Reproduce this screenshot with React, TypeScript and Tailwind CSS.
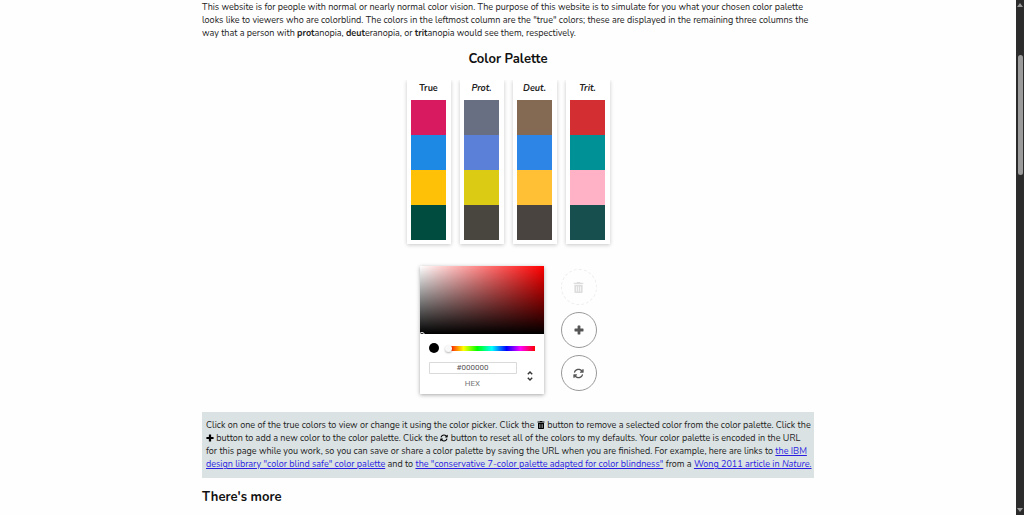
import React from 'react'
import { FaPlus, FaTrashAlt } from 'react-icons/fa'
import { FaArrowsRotate } from 'react-icons/fa6'

const palette = [
  { name: 'True', colors: ['#d81b60', '#1e88e5', '#ffc107', '#004d40'] },
  { name: 'Prot.', colors: ['#696f82', '#5b80d8', '#dccb14', '#49453f'] },
  { name: 'Deut.', colors: ['#846a53', '#2d86e5', '#ffc036', '#4a4441'] },
  { name: 'Trit.', colors: ['#d32f32', '#009196', '#ffb2c5', '#174e4e'] },
]

const App = () => {
  return (
    <div className="flex h-screen overflow-hidden bg-[#fefefe] font-['Nunito','Lato',sans-serif] text-[9px] leading-[13px] text-[#222]">
      <main className="min-w-0 flex-1 pt-px">
        <div className="mx-auto w-full max-w-[612px]">
          <p className="whitespace-nowrap">
            This website is for people with normal or nearly normal color vision. The purpose of this website is to simulate for you what your chosen color palette
            <br />
            looks like to viewers who are colorblind. The colors in the leftmost column are the "true" colors; these are displayed in the remaining three columns the
            <br />
            way that a person with <b>prot</b>anopia, <b>deut</b>eranopia, or <b>trit</b>anopia would see them, respectively.
          </p>
          <h2 className="mt-2.5 text-center text-[13px] leading-[18px] font-bold text-[#111]">Color Palette</h2>
          <div className="mt-3 flex justify-center gap-[9px] overflow-hidden pb-2">
            {palette.map((column) => (
              <Column key={column.name} name={column.name} colors={column.colors} />
            ))}
          </div>
          <div className="mt-3.5 flex items-center justify-center gap-[17px]">
            <ColorPicker />
            <div className="flex flex-col gap-[7px]">
              <RoundButton label="Remove color" disabled>
                <FaTrashAlt />
              </RoundButton>
              <RoundButton label="Add color">
                <PlusIcon className="size-2.5" />
              </RoundButton>
              <RoundButton label="Reset colors">
                <FaArrowsRotate />
              </RoundButton>
            </div>
          </div>
          <Instructions />
          <h2 className="mt-2.5 text-[13px] leading-[18px] font-bold text-[#111]">There's more</h2>
        </div>
      </main>
      <Scrollbar />
    </div>
  )
}

const Column = ({ name, colors }: { name: string; colors: string[] }) => {
  const isTrue = name === 'True'
  return (
    <section className="flex w-11 flex-col items-center bg-white pb-1 shadow-[0_1px_4px_rgba(0,0,0,0.22)]">
      <h3 className={`h-5 pt-0.5 font-bold text-[#222] ${isTrue ? '' : 'italic'}`}>{name}</h3>
      {colors.map((color) =>
        isTrue ? (
          <button key={color} aria-label={color} className="size-[35px]" style={{ backgroundColor: color }} />
        ) : (
          <div key={color} className="size-[35px]" style={{ backgroundColor: color }} />
        )
      )}
    </section>
  )
}

const ColorPicker = () => {
  return (
    <div className="w-[124px] bg-white pb-1 shadow-[0_1px_4px_rgba(0,0,0,0.35)]">
      <div className="relative h-[68px] overflow-hidden bg-[linear-gradient(to_top,#000,transparent),linear-gradient(to_right,#fff,#f00)]">
        <span className="absolute -bottom-1 -left-px size-1.5 rounded-full border border-white" />
      </div>
      <div className="flex items-center gap-2.5 px-[9px] pt-[9px]">
        <span className="size-2.5 rounded-full bg-black" />
        <div className="relative h-[5px] flex-1 bg-[linear-gradient(to_right,#f00,#ff0_17%,#0f0_33%,#0ff_50%,#00f_67%,#f0f_83%,#f00)]">
          <span className="absolute -top-px -left-1 size-[7px] rounded-full bg-[#f8f8f8] shadow-[0_1px_2px_rgba(0,0,0,0.3)]" />
        </div>
      </div>
      <div className="flex items-center gap-2 px-[9px] pt-[9px] font-['Roboto',sans-serif]">
        <div className="flex flex-1 flex-col items-center">
          <input
            id="hex"
            defaultValue="#000000"
            className="h-3 w-full min-w-0 rounded-[1px] text-center text-[8px] leading-3 text-[#555] shadow-[inset_0_0_0_1px_#dadada]"
          />
          <label htmlFor="hex" className="mt-1 text-[8px] leading-3 text-[#777]">
            HEX
          </label>
        </div>
        <button aria-label="Change color format" className="flex w-2.5 justify-center text-[#333]">
          <svg width="8" height="12" viewBox="0 0 8 12" fill="none" stroke="currentColor" strokeWidth="1.4">
            <path d="M1.8 4.2 4 2l2.2 2.2M1.8 7.8 4 10l2.2-2.2" />
          </svg>
        </button>
      </div>
    </div>
  )
}

const RoundButton = ({ label, disabled, children }: { label: string; disabled?: boolean; children: React.ReactNode }) => {
  return (
    <button
      aria-label={label}
      disabled={disabled}
      className="flex size-9 items-center justify-center rounded-full border border-[#999] text-[11px] text-[#555] disabled:border-dashed disabled:border-[#eee] disabled:text-[#ddd]"
    >
      {children}
    </button>
  )
}

const PlusIcon = ({ className }: { className?: string }) => (
  <svg viewBox="0 0 10 10" fill="currentColor" className={className}>
    <path d="M4 .5h2a.4.4 0 0 1 .4.4v2.7h2.7a.4.4 0 0 1 .4.4v2a.4.4 0 0 1-.4.4H6.400v2.700a.4.4 0 0 1-.4.4H4a.4.4 0 0 1-.4-.4V6.400H.9a.4.4 0 0 1-.4-.4V4a.4.4 0 0 1 .4-.4h2.700V.9A.4.4 0 0 1 4 .5z" />
  </svg>
)

const Instructions = () => {
  return (
    <div className="mt-[18px] bg-[#dbe2e4] px-1 py-[7px] whitespace-nowrap">
      Click on one of the true colors to view or change it using the color picker. Click the <FaTrashAlt className="inline size-2 align-[-1px] text-black" /> button to remove a selected color from the color palette. Click the
      <br />
      <PlusIcon className="inline size-2 align-[-1px] text-black" /> button to add a new color to the color palette. Click the <FaArrowsRotate className="inline size-2 align-[-1px] text-black" /> button to reset all of the colors to my defaults. Your color palette is encoded in the URL
      <br />
      for this page while you work, so you can save or share a color palette by saving the URL when you are finished. For example, here are links to <Link>the IBM</Link>
      <br />
      <Link>design library "color blind safe" color palette</Link> and to <Link>the "conservative 7-color palette adapted for color blindness"</Link> from a{' '}
      <Link>
        Wong 2011 article in <i>Nature.</i>
      </Link>
    </div>
  )
}

const Link = ({ children }: { children: React.ReactNode }) => (
  <a href="#" className="text-[#2a1fe0] underline">
    {children}
  </a>
)

const Scrollbar = () => {
  return (
    <div className="flex w-2 flex-col items-center justify-between bg-[#2b2b2b] py-[3px] text-[#999]">
      <svg width="6" height="4" viewBox="0 0 6 4" fill="currentColor">
        <path d="M3 0 6 4H0z" />
      </svg>
      <div className="mt-12 mb-auto h-[120px] w-[5px] rounded-full bg-[#9b9b9b]" />
      <svg width="6" height="4" viewBox="0 0 6 4" fill="currentColor">
        <path d="M3 4 0 0h6z" />
      </svg>
    </div>
  )
}

export default App
